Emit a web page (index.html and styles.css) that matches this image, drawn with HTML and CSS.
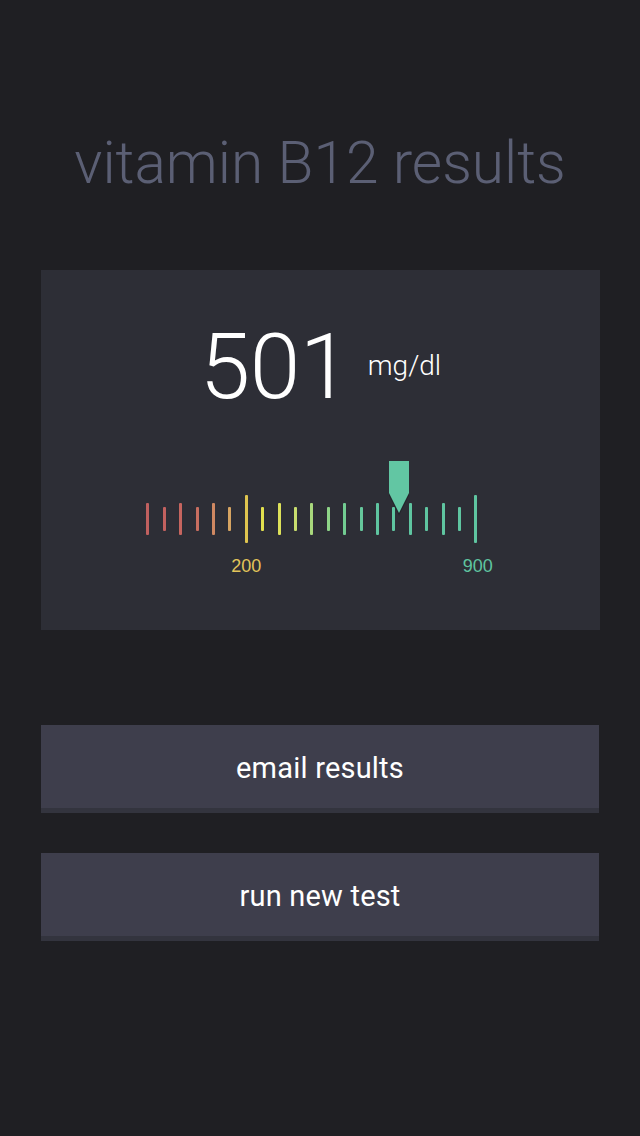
FILE: index.html
```html
<!DOCTYPE html>
<html>
<head>
<meta charset="utf-8">
<link rel="stylesheet" href="styles.css">
</head>
<body>
<main class="page">
  <h1 class="title">vitamin B12 results</h1>
  <section class="card">
    <div class="reading">
      <span class="value">501</span>
      <span class="unit">mg/dl</span>
    </div>
    <div class="gauge">
      <span class="tick long c0"></span>
      <span class="tick c1"></span>
      <span class="tick long c2"></span>
      <span class="tick c3"></span>
      <span class="tick long c4"></span>
      <span class="tick c5"></span>
      <span class="tick tall c6"></span>
      <span class="tick c7"></span>
      <span class="tick long c8"></span>
      <span class="tick c9"></span>
      <span class="tick long c10"></span>
      <span class="tick c11"></span>
      <span class="tick long c12"></span>
      <span class="tick c13"></span>
      <span class="tick long c14"></span>
      <span class="tick c14"></span>
      <span class="tick long c14"></span>
      <span class="tick c14"></span>
      <span class="tick long c14"></span>
      <span class="tick c14"></span>
      <span class="tick tall c14"></span>
      <span class="label label-200">200</span>
      <span class="label label-900">900</span>
      <svg class="marker" width="24" height="56" viewBox="0 0 24 56">
        <path d="M2 1 H22 V33 L12 53 L2 33 Z" fill="#1b1c20" opacity="0.55" transform="translate(0 1.5)"/>
        <path d="M2 0 H22 V32 L12 52 L2 32 Z" fill="#62c6a3"/>
      </svg>
    </div>
  </section>
  <div class="actions">
    <button class="btn">email results</button>
    <button class="btn">run new test</button>
  </div>
</main>
</body>
</html>
```
FILE: styles.css
```css
html, body {
  margin: 0;
  padding: 0;
  background: #1f1f23;
}
body {
  font-family: Roboto, "Liberation Sans", sans-serif;
  color: #fff;
  width: 640px;
  height: 1136px;
  overflow: hidden;
}
.page {
  padding: 0 40px 0 41px;
  display: flex;
  flex-direction: column;
}
.title {
  margin: 128px 0 0;
  font-weight: 300;
  font-size: 58.6px;
  line-height: 70px;
  color: #5b5f74;
  text-align: center;
  letter-spacing: 0;
  padding-right: 1px;
}
.card {
  margin-top: 72px;
  height: 360px;
  background: #2d2e36;
  display: flex;
  flex-direction: column;
}
.reading {
  margin-top: 47px;
  display: flex;
  justify-content: center;
  align-items: flex-start;
  padding-left: 0;
}
.value {
  font-weight: 300;
  font-size: 91px;
  line-height: 100px;
  letter-spacing: -0.5px;
}
.unit {
  font-weight: 300;
  font-size: 28px;
  line-height: 30px;
  margin: 34px 0 0 18px;
}
.gauge {
  position: relative;
  margin: 78px 0 0 98.8px;
  display: grid;
  grid-template-columns: repeat(21, 16.4px);
  grid-template-rows: 48px auto;
  align-items: center;
  justify-items: center;
}
.tick {
  grid-row: 1;
  width: 3px;
  height: 24px;
  border-radius: 1px;
}
.tick.long { height: 32px; }
.tick.tall { height: 48px; }
.c0 { background: #c0605f; }
.c1 { background: #c2615f; }
.c2 { background: #c6655f; }
.c3 { background: #c86e60; }
.c4 { background: #cf8862; }
.c5 { background: #d6a462; }
.c6 { background: #dec44f; }
.c7 { background: #e2e04e; }
.c8 { background: #dde15a; }
.c9 { background: #c8dd6e; }
.c10 { background: #a8d77c; }
.c11 { background: #8ed488; }
.c12 { background: #72cc92; }
.c13 { background: #65c79c; }
.c14 { background: #5fc5a1; }
.label {
  grid-row: 2;
  margin-top: 12px;
  font-family: "Liberation Sans", Arial, sans-serif;
  font-size: 18px;
  line-height: 22px;
  white-space: nowrap;
  justify-self: center;
}
.label-200 {
  grid-column: 7;
  color: #e3c45a;
}
.label-900 {
  grid-column: 21;
  color: #5fc4a0;
  margin-left: 4px;
}
.marker {
  position: absolute;
  left: 247px;
  top: -34px;
}
.actions {
  margin-top: 95px;
  display: flex;
  flex-direction: column;
  gap: 40px;
}
.btn {
  display: block;
  width: 558px;
  height: 88px;
  border: none;
  border-bottom: 5px solid #33343e;
  background: #3e3e4c;
  color: #fff;
  font-family: Roboto, "Liberation Sans", sans-serif;
  font-weight: 400;
  font-size: 29px;
  letter-spacing: 0.2px;
  padding: 2px 0 0;
  text-align: center;
}
```
